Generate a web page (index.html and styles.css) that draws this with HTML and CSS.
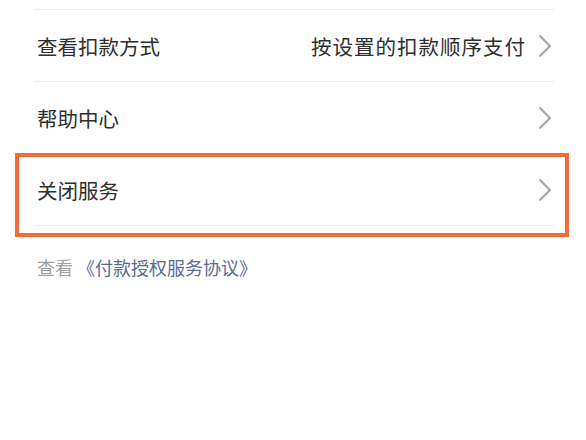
FILE: index.html
```html
<!DOCTYPE html>
<html lang="zh-CN">
<head>
<meta charset="utf-8">
<title>扣款服务</title>
<link rel="stylesheet" href="styles.css">
</head>
<body>

<div class="page">
  <!-- 上一行（截图里只露出底线） -->
  <div class="cut"></div>

  <div class="list">
    <div class="item">
      <span class="label">查看扣款方式</span>
      <span class="value">按设置的扣款顺序支付</span>
      <svg class="arrow" viewBox="0 0 14 24" width="14" height="24"><polyline points="1.5,1.5 12,12 1.5,22.5"/></svg>
    </div>
    <div class="item">
      <span class="label">帮助中心</span>
      <svg class="arrow" viewBox="0 0 14 24" width="14" height="24"><polyline points="1.5,1.5 12,12 1.5,22.5"/></svg>
    </div>
    <div class="item marked">
      <span class="label">关闭服务</span>
      <svg class="arrow" viewBox="0 0 14 24" width="14" height="24"><polyline points="1.5,1.5 12,12 1.5,22.5"/></svg>
      <div class="mark"></div>
    </div>
  </div>

  <p class="note">查看 <a href="#">《付款授权服务协议》</a></p>
</div>

</body>
</html>
```

FILE: styles.css
```css
/* --------- GENEL --------- */
*{box-sizing:border-box;margin:0;padding:0}
body{
  font-family:"Noto Sans CJK SC","Noto Sans",sans-serif;
  background:#fff;
  color:#2e2e2e;
}
.page{min-height:440px;background:#fff}

/* --------- LİSTE --------- */
.cut{height:10px;margin:0 32px 0 34px;border-bottom:1px solid #ececec}
.item{
  position:relative;
  display:flex;
  align-items:center;
  height:72px;
  margin:0 32px 0 34px;
  padding:0 2px 0 3px;
  border-bottom:1px solid #ececec;
  font-size:20.5px;
}
.label{flex:1}
.value{margin-right:12px;letter-spacing:1px}
.arrow{fill:none;stroke:#a3a3a3;stroke-width:2}

/* turuncu işaret kutusu */
.mark{
  position:absolute;
  top:-1px;
  left:-19px;
  right:-15px;
  bottom:-12px;
  border:4px solid #f36b3b;
  pointer-events:none;
}

/* --------- ALT NOT --------- */
.note{
  padding:29px 0 0 37px;
  font-size:18px;
  line-height:24px;
  color:#a0a0a0;
}
.note a{color:#5a6b93;text-decoration:none}
```
